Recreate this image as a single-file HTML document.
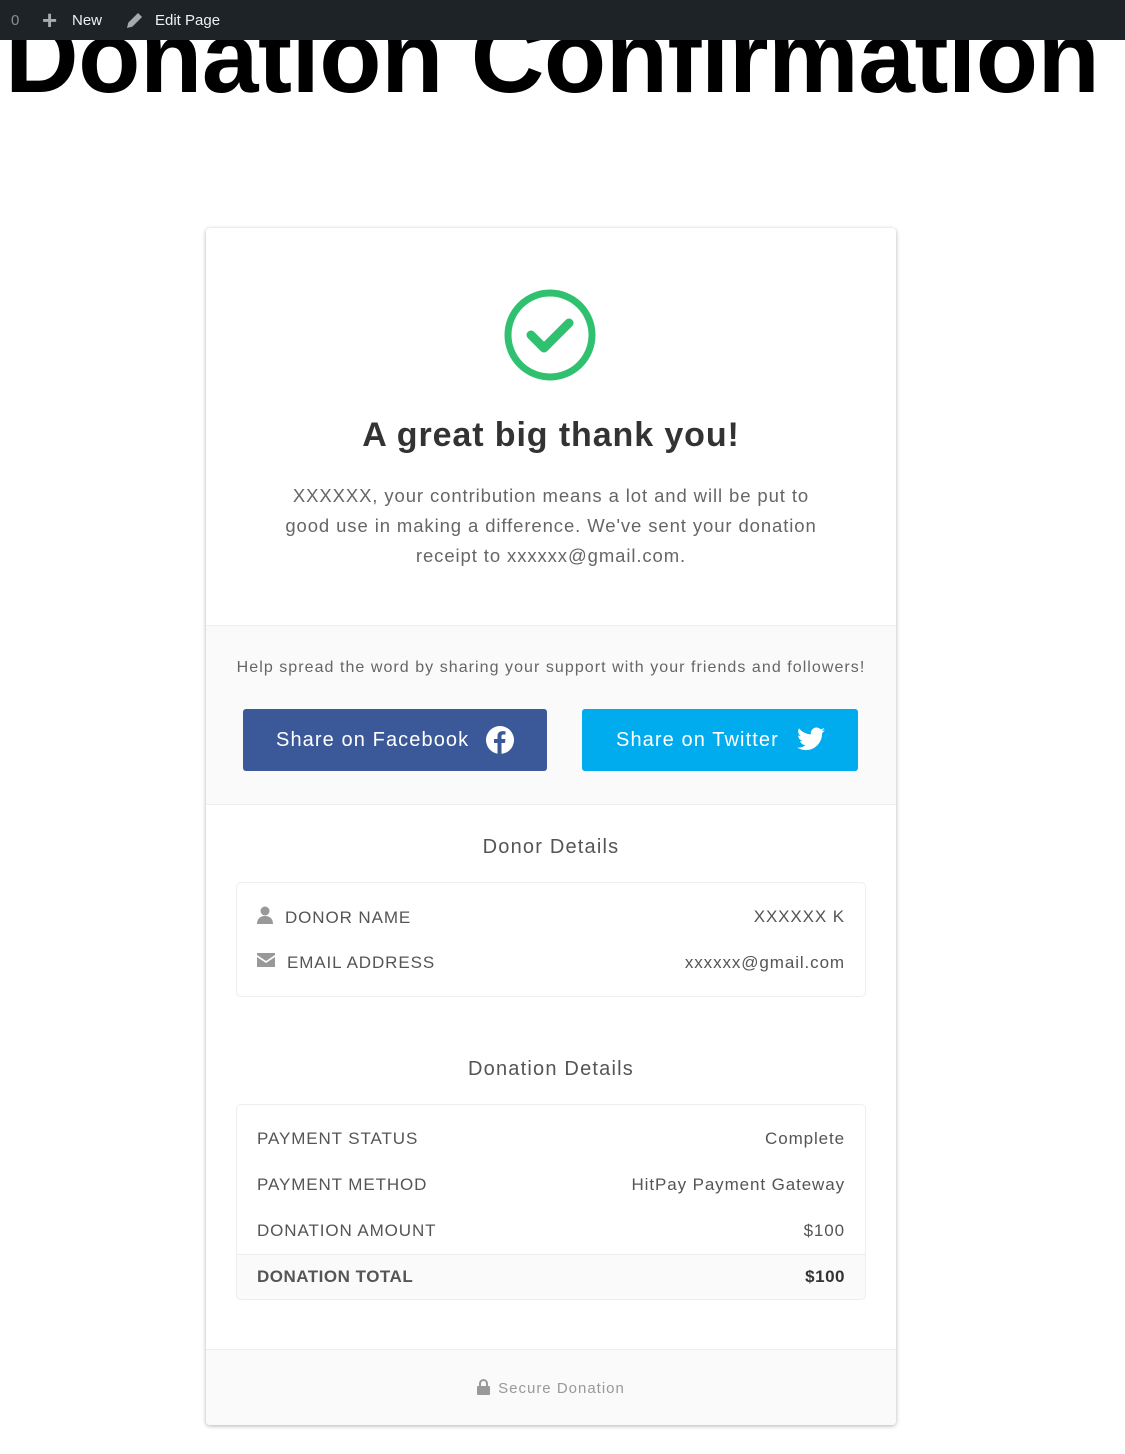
<!DOCTYPE html>
<html><head><meta charset="utf-8"><style>
*{margin:0;padding:0;box-sizing:border-box}
body{width:1125px;height:1454px;position:relative;background:#fff;font-family:"Liberation Sans",sans-serif;overflow:hidden;color:#555}
.abs{position:absolute}
.bar{left:0;top:0;width:1125px;height:40px;background:#1d2327;color:#f0f0f1;font-size:15px;z-index:2}
.title{left:5px;top:7px;font-size:102px;line-height:100px;font-weight:bold;color:#000;white-space:nowrap;letter-spacing:-0.5px}
.card{left:206px;top:228px;width:690px;height:1197px;background:#fff;border-radius:4px;box-shadow:0 1px 4px rgba(0,0,0,.3);overflow:hidden}
.c{text-align:center;width:100%;left:0}
.row{left:20px;right:20px;height:46px;font-size:17px;color:#555;display:flex;align-items:center;justify-content:space-between;letter-spacing:0.9px}
.box{left:30px;width:630px;border:1px solid #eee;border-radius:5px}
</style></head><body>
<div class="abs bar">
<span class="abs" style="left:11px;top:12px;color:#8c8f94">0</span>
<span class="abs" style="left:42px;top:6px;font-size:26px;color:#a7aaad;line-height:28px;font-weight:bold">+</span>
<span class="abs" style="left:72px;top:12px">New</span>
<svg class="abs" style="left:125px;top:12px" width="18" height="18" viewBox="0 0 18 18"><path d="M13 2l3 3-9 9-4 1 1-4z" fill="#a7aaad" stroke="#a7aaad" stroke-width="1.5"/></svg>
<span class="abs" style="left:155px;top:12px">Edit Page</span>
</div>
<div class="abs title">Donation Confirmation</div>
<div class="abs card">
<svg class="abs" style="left:298px;top:61px" width="92" height="92" viewBox="0 0 92 92"><circle cx="46" cy="46" r="42" fill="none" stroke="#2fc16f" stroke-width="7"/><path d="M27 46l13 13 25-25" fill="none" stroke="#2fc16f" stroke-width="9" stroke-linecap="round" stroke-linejoin="round"/></svg>
<div class="abs c" style="top:188px;font-size:34px;font-weight:bold;color:#333;letter-spacing:0.9px">A great big thank you!</div>
<div class="abs c" style="top:253px;font-size:18.5px;line-height:30px;color:#666;letter-spacing:0.9px;white-space:nowrap">XXXXXX, your contribution means a lot and will be put to<br>good use in making a difference. We've sent your donation<br>receipt to xxxxxx@gmail.com.</div>
<div class="abs" style="left:0;top:397px;width:690px;height:180px;background:#fafafa;border-top:1px solid #eee;border-bottom:1px solid #eee">
<div class="abs c" style="top:33px;font-size:16px;color:#666;letter-spacing:1.05px;white-space:nowrap">Help spread the word by sharing your support with your friends and followers!</div>
<div class="abs" style="left:37px;top:83px;width:304px;height:62px;background:#3b5998;border-radius:3px;color:#fff;font-size:20px;line-height:62px;padding-left:33px;letter-spacing:1.1px">Share on Facebook
<svg class="abs" style="left:243px;top:17px" width="28" height="28" viewBox="0 0 28 28"><circle cx="14" cy="14" r="14" fill="#fff"/><path d="M15.5 28V17h3.5l.5-4h-4v-2.5c0-1.2.4-2 2-2h2V5.3c-.4 0-1.6-.2-3-.2-3 0-5 1.8-5 5.1V13H8v4h3.5v11z" fill="#3b5998"/></svg></div>
<div class="abs" style="left:376px;top:83px;width:276px;height:62px;background:#00acee;border-radius:3px;color:#fff;font-size:20px;line-height:62px;padding-left:34px;letter-spacing:1.1px">Share on Twitter
<svg class="abs" style="left:215px;top:18px" width="28" height="24" viewBox="0 0 24 20"><path d="M24 2.4c-.9.4-1.8.7-2.8.8 1-.6 1.8-1.6 2.2-2.7-1 .6-2 1-3.1 1.2A4.9 4.9 0 0 0 11.9 6 14 14 0 0 1 1.7.9a4.9 4.9 0 0 0 1.5 6.6c-.8 0-1.6-.3-2.2-.6 0 2.4 1.7 4.4 3.9 4.8-.7.2-1.5.2-2.2.1.6 2 2.4 3.4 4.6 3.4A9.9 9.9 0 0 1 0 17.3 14 14 0 0 0 7.5 19.5c9 0 14-7.5 14-14v-.6c1-.7 1.8-1.6 2.5-2.5z" fill="#fff"/></svg></div>
</div>
<div class="abs c" style="top:608px;font-size:20px;color:#555;letter-spacing:1.2px">Donor Details</div>
<div class="abs box" style="top:654px;height:115px">
<div class="abs row" style="top:11px"><span><svg width="16" height="18" viewBox="0 0 16 18" style="vertical-align:-1px;margin-right:12px"><circle cx="8" cy="5" r="4.5" fill="#999"/><path d="M0 18c0-5 3-8 8-8s8 3 8 8z" fill="#999"/></svg>DONOR NAME</span><span>XXXXXX K</span></div>
<div class="abs row" style="top:57px"><span><svg width="18" height="14" viewBox="0 0 18 14" style="vertical-align:1px;margin-right:12px"><path d="M0 0h18v2L9 8 0 2z M0 4l9 6 9-6v10H0z" fill="#999"/></svg>EMAIL ADDRESS</span><span>xxxxxx@gmail.com</span></div>
</div>
<div class="abs c" style="top:830px;font-size:20px;color:#555;letter-spacing:1.2px">Donation Details</div>
<div class="abs box" style="top:876px;height:196px;overflow:hidden">
<div class="abs row" style="top:11px"><span>PAYMENT STATUS</span><span>Complete</span></div>
<div class="abs row" style="top:57px"><span>PAYMENT METHOD</span><span>HitPay Payment Gateway</span></div>
<div class="abs row" style="top:103px"><span>DONATION AMOUNT</span><span>$100</span></div>
<div class="abs" style="left:0;right:0;top:149px;height:46px;background:#fafafa;border-top:1px solid #eee"></div>
<div class="abs row" style="top:149px;font-weight:bold;color:#555;letter-spacing:0.5px"><span>DONATION TOTAL</span><span style="color:#333">$100</span></div>
</div>
<div class="abs" style="left:0;top:1121px;width:690px;height:76px;background:#fafafa;border-top:1px solid #eee">
<div class="abs c" style="top:29px;font-size:15px;color:#999;letter-spacing:1px"><svg width="13" height="16" viewBox="0 0 13 16" style="vertical-align:-2px;margin-right:8px"><path d="M3 7V4.5a3.5 3.5 0 0 1 7 0V7" fill="none" stroke="#999" stroke-width="2"/><rect x="0" y="7" width="13" height="9" rx="1" fill="#999"/></svg>Secure Donation</div>
</div>
</div>
</body></html>
